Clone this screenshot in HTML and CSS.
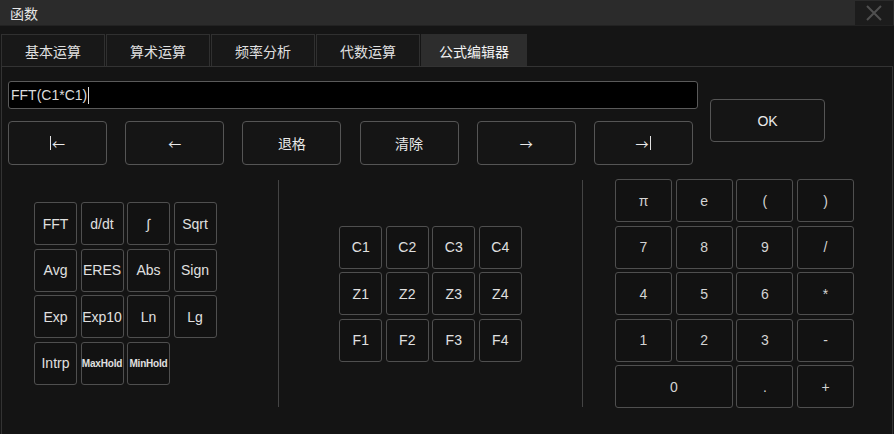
FILE: index.html
```html
<!DOCTYPE html>
<html lang="zh">
<head>
<meta charset="utf-8">
<title>函数</title>
<link rel="stylesheet" href="styles.css">
</head>
<body>
<div class="dialog">
  <div class="titlebar">
    <span class="title">函数</span>
    <div class="close">
      <svg width="16" height="16" viewBox="0 0 16 16"><path d="M1 1 L15 15 M15 1 L1 15" stroke="#505050" stroke-width="2" fill="none"/></svg>
    </div>
  </div>
  <div class="tabs">
    <div class="tab">基本运算</div>
    <div class="tab">算术运算</div>
    <div class="tab">频率分析</div>
    <div class="tab">代数运算</div>
    <div class="tab active">公式编辑器</div>
  </div>
  <div class="panel">
    <div class="top">
      <div class="editor">
        <div class="input">FFT(C1*C1)<span class="caret"></span></div>
        <div class="navrow">
          <div class="btn"><span class="bar bar-l"></span><span class="arrow">←</span></div>
          <div class="btn"><span class="arrow">←</span></div>
          <div class="btn">退格</div>
          <div class="btn">清除</div>
          <div class="btn"><span class="arrow">→</span></div>
          <div class="btn"><span class="arrow">→</span><span class="bar bar-r"></span></div>
        </div>
      </div>
      <div class="btn ok">OK</div>
    </div>
    <div class="bottom">
      <div class="col col-func">
        <div class="grid grid-func">
          <div class="key">FFT</div>
          <div class="key">d/dt</div>
          <div class="key">∫</div>
          <div class="key">Sqrt</div>
          <div class="key">Avg</div>
          <div class="key">ERES</div>
          <div class="key">Abs</div>
          <div class="key">Sign</div>
          <div class="key">Exp</div>
          <div class="key">Exp10</div>
          <div class="key">Ln</div>
          <div class="key">Lg</div>
          <div class="key">Intrp</div>
          <div class="key small">MaxHold</div>
          <div class="key small">MinHold</div>
        </div>
      </div>
      <div class="divider"></div>
      <div class="col col-src">
        <div class="grid grid-src">
          <div class="key">C1</div>
          <div class="key">C2</div>
          <div class="key">C3</div>
          <div class="key">C4</div>
          <div class="key">Z1</div>
          <div class="key">Z2</div>
          <div class="key">Z3</div>
          <div class="key">Z4</div>
          <div class="key">F1</div>
          <div class="key">F2</div>
          <div class="key">F3</div>
          <div class="key">F4</div>
        </div>
      </div>
      <div class="divider"></div>
      <div class="col col-num">
        <div class="grid grid-num">
          <div class="key">π</div>
          <div class="key">e</div>
          <div class="key">(</div>
          <div class="key">)</div>
          <div class="key">7</div>
          <div class="key">8</div>
          <div class="key">9</div>
          <div class="key">/</div>
          <div class="key">4</div>
          <div class="key">5</div>
          <div class="key">6</div>
          <div class="key">*</div>
          <div class="key">1</div>
          <div class="key">2</div>
          <div class="key">3</div>
          <div class="key">-</div>
          <div class="key zero">0</div>
          <div class="key">.</div>
          <div class="key">+</div>
        </div>
      </div>
    </div>
  </div>
</div>
</body>
</html>
```

FILE: styles.css
```css
html, body {
  margin: 0;
  padding: 0;
}
body {
  width: 894px;
  height: 434px;
  overflow: hidden;
  background: #151515;
  font-family: "Liberation Sans", Arial, "Noto Sans CJK SC", sans-serif;
  font-size: 14px;
  color: #e2e2e2;
}
.dialog {
  width: 894px;
  height: 434px;
  display: flex;
  flex-direction: column;
}
.titlebar {
  height: 26px;
  background: #2b2b2b;
  border-bottom: 1px solid #222;
  box-sizing: border-box;
  display: flex;
  align-items: center;
  justify-content: space-between;
}
.title {
  padding-left: 10px;
  font-size: 14px;
  color: #e6e6e6;
}
.close {
  width: 38px;
  height: 24px;
  margin-right: 1px;
  background: #1c1c1c;
  display: flex;
  align-items: center;
  justify-content: center;
}
.tabs {
  display: flex;
  gap: 1px;
  margin-top: 8px;
  padding-left: 1px;
  height: 32px;
}
.tab {
  width: 104px;
  box-sizing: border-box;
  border: 1px solid #303030;
  border-bottom: none;
  background: #181818;
  display: flex;
  align-items: center;
  justify-content: center;
  color: #e0e0e0;
}
.tab.active {
  width: 106px;
  background: #2d2d2d;
  border-color: #2d2d2d;
  color: #f2f2f2;
}
.panel {
  flex: 1;
  margin-left: 1px;
  margin-right: 1px;
  border: 1px solid #333;
  border-bottom: none;
  background: #141414;
  padding: 14px 6px 0 6px;
}
.top {
  display: flex;
  align-items: flex-start;
}
.editor {
  width: 690px;
}
.input {
  height: 28px;
  box-sizing: border-box;
  background: #000;
  border: 1px solid #5a5a5a;
  border-radius: 3px;
  padding-left: 2px;
  display: flex;
  align-items: center;
  color: #dcdcdc;
  font-size: 14px;
}
.caret {
  display: inline-block;
  width: 0;
  height: 17px;
  border-left: 1px solid #e0e0e0;
  margin-left: 1px;
}
.navrow {
  margin-top: 12px;
  display: grid;
  grid-template-columns: repeat(6, 99px);
  column-gap: 18.2px;
}
.btn {
  height: 44px;
  box-sizing: border-box;
  border: 1px solid #555;
  border-radius: 4px;
  background: #151515;
  display: flex;
  align-items: center;
  justify-content: center;
  color: #eaeaea;
}
.arrow {
  font-family: "Noto Sans CJK SC", "DejaVu Sans", sans-serif;
  font-size: 13px;
}
.bar {
  display: inline-block;
  width: 0;
  height: 14px;
  border-left: 1px solid #e0e0e0;
}
.bar-l {
  margin-right: 1px;
}
.bar-r {
  margin-left: 2px;
}
.ok {
  width: 115px;
  height: 43px;
  margin-left: 12px;
  margin-top: 18px;
}
.bottom {
  margin-top: 14px;
  margin-left: -6px;
  height: 229px;
  display: flex;
  align-items: center;
}
.col {
  height: 229px;
  display: flex;
  align-items: center;
}
.col-func {
  width: 276px;
  padding-left: 32px;
  box-sizing: border-box;
}
.col-src {
  width: 303px;
  justify-content: center;
}
.col-num {
  flex: 1;
  padding-left: 32px;
}
.divider {
  width: 1px;
  height: 227px;
  background: #444;
}
.grid {
  display: grid;
  row-gap: 3.5px;
  column-gap: 3.5px;
}
.grid-func, .grid-src {
  grid-template-columns: repeat(4, 43px);
  grid-auto-rows: 43px;
}
.grid-num {
  grid-template-columns: repeat(4, 57px);
  grid-auto-rows: 43px;
  column-gap: 3.7px;
}
.key {
  box-sizing: border-box;
  border: 1px solid #4f4f4f;
  border-radius: 3px;
  background: #121212;
  display: flex;
  align-items: center;
  justify-content: center;
  color: #e0e0e0;
  font-size: 14px;
  white-space: nowrap;
}
.key.small {
  font-size: 10px;
  font-weight: bold;
  letter-spacing: -0.2px;
}
.key.zero {
  grid-column: span 2;
}
.grid-num .key {
  color: #d4d4d4;
}
```
